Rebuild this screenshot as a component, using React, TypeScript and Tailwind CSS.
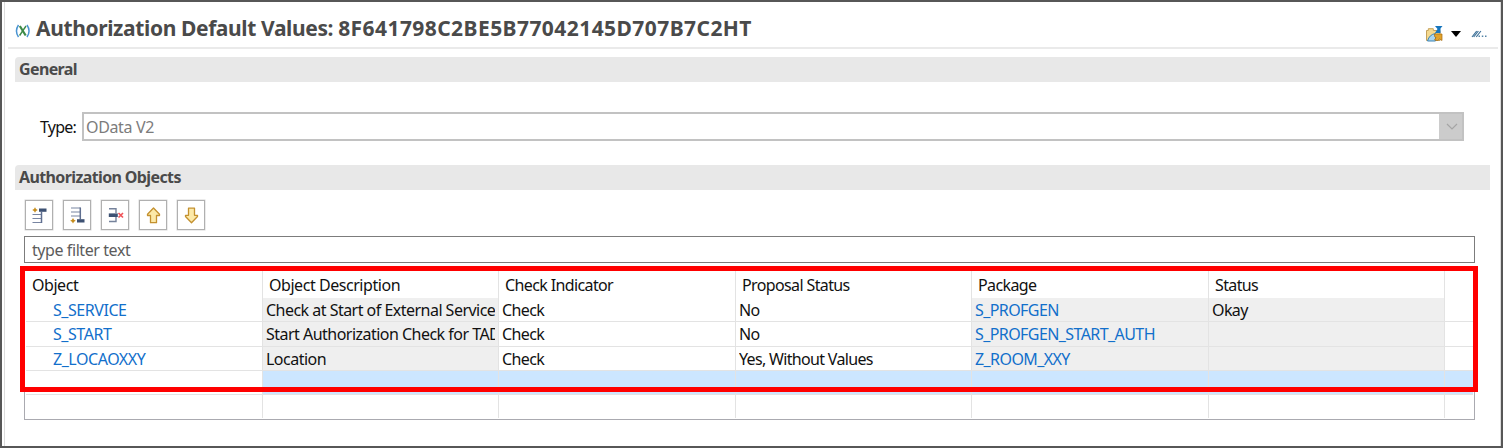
import React from "react";

type Row = { cells: string[]; selected?: boolean };

const columns = ["Object", "Object Description", "Check Indicator", "Proposal Status", "Package", "Status"];

const rows: Row[] = [
  { cells: ["S_SERVICE", "Check at Start of External Service", "Check", "No", "S_PROFGEN", "Okay"] },
  { cells: ["S_START", "Start Authorization Check for TAD", "Check", "No", "S_PROFGEN_START_AUTH", ""] },
  { cells: ["Z_LOCAOXXY", "Location", "Check", "Yes, Without Values", "Z_ROOM_XXY", ""] },
  { cells: ["", "", "", "", "", ""], selected: true },
];

const grid = "grid grid-cols-[237px_236px_237px_236px_237px_236px_1fr]";
const readOnly = [false, true, false, false, true, true];
const tracking = [
  "tracking-[-0.45px]",
  "tracking-[-0.52px]",
  "tracking-[-0.6px]",
  "tracking-[-0.67px]",
  "tracking-[-0.58px]",
  "tracking-[-0.6px]",
];

function Section({ title }: { title: string }) {
  return (
    <h2 className="flex h-[25px] shrink-0 items-center rounded-tl-sm bg-[#e8e8e8] pb-px pl-1 text-[16px] font-bold tracking-[-0.62px] text-[#4a4a4a]">
      {title}
    </h2>
  );
}

function ToolButton({ children }: { children: React.ReactNode }) {
  return (
    <button className="flex h-[30px] w-7 items-center justify-center border border-[#b0b0b0] bg-white shadow-[0_0_0_0.5px_#d8d8d8]">
      <svg width="18" height="18" viewBox="0 0 18 18">{children}</svg>
    </button>
  );
}

const Spark = ({ x, y }: { x: number; y: number }) => (
  <path
    transform={`translate(${x} ${y})`}
    d="M0-2.800 1-1 2.800 0 1 1 0 2.800-1 1-2.800 0-1-1Z"
    fill="#c68d1c"
  />
);

function Toolbar() {
  return (
    <div className="flex gap-[10px]">
      <ToolButton>
        <Spark x={5} y={4} />
        <rect x="9" y="2.500" width="7.500" height="3.300" fill="#3d5173" />
        <path d="M2.500 8.500h9M2.500 12.500h9M2.500 16.500h9" stroke="#7885a2" strokeWidth="1.200" fill="none" />
        <path d="M11.500 5v12" stroke="#5f6f90" strokeWidth="1.500" />
      </ToolButton>
      <ToolButton>
        <path d="M3 2h9M3 6h9M3 10h9" stroke="#7885a2" strokeWidth="1.200" fill="none" />
        <path d="M12.300 1.400v12" stroke="#5f6f90" strokeWidth="1.500" />
        <Spark x={5} y={14.8} />
        <rect x="9" y="13.200" width="7.500" height="3.300" fill="#3d5173" />
      </ToolButton>
      <ToolButton>
        <path d="M3 2.800h7V7M3 15.500h7V11" stroke="#75829b" strokeWidth="1.400" fill="none" />
        <rect x="2.800" y="7.400" width="9" height="3.600" fill="#3d5173" />
        <path d="m12.500 7 4.500 4.500m0-4.500-4.500 4.500" stroke="#f0555a" strokeWidth="1.700" />
      </ToolButton>
      <ToolButton>
        <path d="m9.500 2 6 6.300v1.200h-3v7.200h-6V9.500h-3V8.300Z" fill="#fce9a8" stroke="#c4912f" strokeWidth="1.300" strokeLinejoin="round" />
      </ToolButton>
      <ToolButton>
        <path d="m9.500 16.800 6-6.300V9.300h-3V2.200h-6v7.100h-3v1.200Z" fill="#fce9a8" stroke="#c4912f" strokeWidth="1.300" strokeLinejoin="round" />
      </ToolButton>
    </div>
  );
}

function TitleBar() {
  return (
    <header className="ml-[3px] mr-[2px] flex h-[47px] shrink-0 border-b-2 border-[#eaeaea] pl-[7px] pr-[12px]">
      <svg className="mt-[22px] shrink-0" width="16" height="14" viewBox="0 0 16 14" fill="none">
        <path d="M3.500 1Q-.6 7 3.500 13M12 1q4.100 6 0 12" stroke="#4a94d2" strokeWidth="1.500" />
        <path d="m4.800 2 5.900 9.500" stroke="#3c8a47" strokeWidth="2.200" />
        <path d="M11 2 4.600 11.500" stroke="#3c8a47" strokeWidth="1.400" />
      </svg>
      <h1 className="ml-[5px] mt-[12px] whitespace-nowrap text-[21px] font-bold leading-[28px] tracking-[-0.38px] text-[#4a4a4a]">
        Authorization Default Values: <span className="tracking-[0.43px]">8F641798C2BE5B77042145D707B7C2HT</span>
      </h1>
      <svg className="ml-auto mt-[24px] shrink-0" width="17" height="16" viewBox="0 0 17 16">
        <path d="M.5 14.500v-10h1.800V2.700h5v1.800H14v10Z" fill="#f5d98f" stroke="#c5a25b" />
        <path d="M9 0h7.500L14.500 2.500V7H9L11.500 3Z" fill="#1675bd" />
        <path d="M1.500 15q1.800-6.500 8-7.500V15Z" fill="#a8d5f0" stroke="#3b83b5" />
        <path d="M8.500 8H16v6.500l-2.500-1.500-2 1.500-3-.5 1.500-2.500-1.500-1Z" fill="#e2a32a" stroke="#a66c12" strokeWidth=".7" />
      </svg>
      <svg className="ml-[8px] mt-[29px] shrink-0" width="10" height="7" viewBox="0 0 10 7">
        <path d="M0 0h10L5 6Z" fill="#000" />
      </svg>
      <svg className="-mr-[2px] ml-[10px] mt-[28px] shrink-0" width="17" height="8" viewBox="0 0 17 8">
        <path d="M1 7 5.700 1M2.700 7 7.400 1M5.200 7l4.700-6" stroke="#3f7299" strokeWidth="1.200" />
        <path d="M7.500 5.500H9V7H7.500ZM10.800 5.500h1.500V7h-1.500ZM14 5.500h1.500V7H14Z" fill="#5685a8" />
      </svg>
    </header>
  );
}

function ObjectTable() {
  return (
    <div className="relative mt-[3px] h-[154px] w-[1451px] border border-[#aaaab0] px-px text-[16px] leading-[20px] text-[#111]">
      <div className={`${grid} h-[31px]`}>
        {columns.map((c) => (
          <div key={c} className={`whitespace-nowrap border-r border-[#e3e3e3] pl-[6px] pt-[8px] ${c.startsWith("Object") ? "tracking-[-0.45px]" : "tracking-[-0.62px]"}`}>{c}</div>
        ))}
      </div>
      {rows.map((row, r) => (
        <div key={r} className={`${grid} h-[24.350px] border-b border-[#e3e3e3] ${row.selected ? "bg-gradient-to-r from-white from-[237px] to-[#cce6ff] to-[237px]" : ""}`}>
          {row.cells.map((text, c) => (
            <div
              key={c}
              className={`whitespace-nowrap border-r border-[#e3e3e3] pr-[3px] pt-[2px] ${tracking[c]} ${c === 0 ? "pl-[27px]" : "pl-[3px]"} ${c === 0 || c === 4 ? "text-[#126fcb]" : ""} ${readOnly[c] && !row.selected ? "bg-[#efefef]" : ""}`}
            >
              <div className="overflow-hidden">{text}</div>
            </div>
          ))}
        </div>
      ))}
      <div className={`${grid} h-[23px]`}>
        {columns.map((c) => (
          <div key={c} className="border-r border-[#e3e3e3]" />
        ))}
      </div>
      <div className="pointer-events-none absolute -left-[5px] -top-[1px] h-[126px] w-[1458px] border-[5px] border-[#ff0000]" />
    </div>
  );
}

export default function App() {
  return (
    <div className="h-[448px] w-[1503px] overflow-hidden border-2 border-[#575757] bg-white font-['Noto_Sans',sans-serif]">
      <main className="ml-[2px] flex h-full flex-col border-x border-[#dcdcdc]">
        <TitleBar />
        <div className="ml-[10px] mr-[10px] mt-2 flex flex-col">
          <Section title="General" />
          <div className="ml-[25px] mt-[30px] flex h-[29px] text-[16px] leading-[20px]">
            <label className="w-[42px] shrink-0 whitespace-nowrap pt-[5px] tracking-[-0.8px] text-[#111]">Type:</label>
            <div className="flex w-[1382px] border-2 border-[#c2c2c2]">
              <span className="flex-1 pl-[2px] pt-[3px] tracking-[-0.35px] text-[#7c7c7c]">OData V2</span>
              <span className="flex w-[23px] items-center justify-center bg-[#cccccc] pl-[2px]">
                <svg width="12" height="8" viewBox="0 0 12 8">
                  <path d="m1 1 5 5 5-5" fill="none" stroke="#a5a5a5" strokeWidth="1.2" />
                </svg>
              </span>
            </div>
          </div>
          <div className="mt-[24px] flex flex-col">
            <Section title="Authorization Objects" />
          </div>
          <div className="ml-[9px] mt-[9px]">
            <div className="ml-px pt-[0.5px]"><Toolbar /></div>
            <div className="mt-[6.5px] h-[27px] w-[1451px] border border-[#7c7c7c] pl-[7px] pt-[3px] text-[16px] leading-[20px] tracking-[-0.42px] text-[#5c5c5c]">
              type filter text
            </div>
            <ObjectTable />
          </div>
        </div>
      </main>
    </div>
  );
}
